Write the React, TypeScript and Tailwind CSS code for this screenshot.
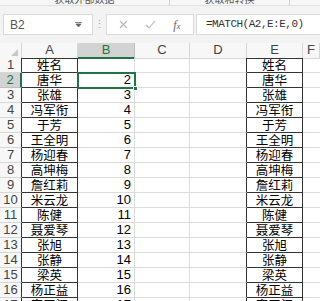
import React from 'react';

const names = [
  '姓名', '唐华', '张雄', '冯军衔', '于芳', '王全明', '杨迎春', '高坤梅', '詹红莉',
  '米云龙', '陈健', '聂爱琴', '张旭', '张静', '梁英', '杨正益', '宫玉江',
];

const cols = ['A', 'B', 'C', 'D', 'E', 'F'];

const gridCols = 'grid grid-cols-[22px_56px_57px_55px_57px_56px_1fr]';
const cjk = "font-['Noto_Sans_CJK_SC',sans-serif]";
const latin = "font-['Liberation_Sans',Arial,sans-serif]";

const App: React.FC = () => {
  return (
    <div className={`w-[320px] h-[301px] overflow-hidden bg-white ${latin}`}>
      {/* ribbon group labels, cut off at the top */}
      <div className="h-[6px] overflow-hidden flex items-end bg-[#f6f6f6] border-b border-[#e1e1e1]">
        <div className={`flex items-end h-[12px] shrink-0 text-[10px] leading-[12px] text-[#555] ${cjk}`}>
          <span className="w-[170px] text-center border-r border-[#cfcfcf]">获取外部数据</span>
          <span className="w-[120px] text-center border-r border-[#cfcfcf]">获取和转换</span>
        </div>
      </div>

      {/* formula bar */}
      <div className="h-[37px] pt-[8px] bg-[#f3f3f3] flex items-start">
        <div className="ml-[3px] w-[90px] h-[21px] bg-white border border-[#dadada] flex items-center justify-between pl-[6px] pr-[10px] text-[12px] text-[#555]">
          <span>B2</span>
          <svg width="7" height="5" viewBox="0 0 7 5">
            <path d="M0 0.5h7M1 2l2.5 3L6 2z" fill="#666" stroke="#666" strokeWidth="0.8" />
          </svg>
        </div>
        <div className="w-[13px] h-[21px] flex items-center justify-center text-[#aaa] text-[11px]">⋮</div>
        <div className="w-[88px] h-[21px] bg-white border border-[#dadada] flex items-center justify-around px-[4px] text-[#9a9a9a]">
          <svg width="9" height="9" viewBox="0 0 9 9">
            <path d="M1 1l7 7M8 1l-7 7" stroke="#b5b5b5" strokeWidth="1.1" />
          </svg>
          <svg width="11" height="9" viewBox="0 0 11 9">
            <path d="M1 5l3 3 6-7" stroke="#b5b5b5" strokeWidth="1.1" fill="none" />
          </svg>
          <span className="italic font-['Liberation_Serif',serif] text-[12px] text-[#666]">
            f<span className="text-[9px]">x</span>
          </span>
        </div>
        <div className="ml-[2px] flex-1 h-[21px] bg-white border border-[#dadada] border-r-0 flex items-center pl-[9px] text-[11px] tracking-[-0.5px] text-[#333] font-['Liberation_Mono',monospace]">
          =MATCH(A2,E:E,0)
        </div>
      </div>

      {/* sheet grid */}
      <div className="relative">
        <div className={`${gridCols} h-[15px] bg-[#f7f7f7] text-[13px] leading-[14px] text-[#444]`}>
          <div className="border-r border-b border-[#d6d6d6] flex items-end justify-end pr-[3px] pb-[2px]">
            <svg width="7" height="7" viewBox="0 0 7 7">
              <path d="M7 0V7H0z" fill="#c8c8c8" />
            </svg>
          </div>
          {cols.map((c) =>
            c === 'B' ? (
              <div key={c} className="bg-[#d3d3d3] border-r border-[#bdbdbd] border-b-2 border-b-[#217346] text-center text-[#217346]">
                {c}
              </div>
            ) : (
              <div
                key={c}
                className={`border-r border-[#d6d6d6] border-b text-center ${
                  c === 'A' || c === 'E' ? 'border-b-[#333]' : 'border-b-[#d6d6d6]'
                }`}
              >
                {c}
              </div>
            )
          )}
        </div>

        {names.map((name, i) => {
          const row = i + 1;
          const sel = row === 2;
          return (
            <div key={row} className={`${gridCols} h-[15px] text-[13px] leading-[14px]`}>
              <div
                className={`border-b text-center ${
                  sel
                    ? 'bg-[#d3d3d3] text-[#217346] border-r-2 border-r-[#217346] border-b-[#bdbdbd]'
                    : 'bg-[#f7f7f7] text-[#444] border-r border-r-[#333] border-b-[#d6d6d6]'
                }`}
              >
                {row}
              </div>
              <div className={`border-r border-b border-[#333] text-center text-black ${cjk} text-[12.5px] leading-[14px]`}>
                {name}
              </div>
              <div className="border-r border-b border-[#dcdcdc] text-right pr-[3px] text-black">
                {row > 1 ? row : ''}
              </div>
              <div className="border-r border-b border-[#dcdcdc]" />
              <div className="border-r border-r-[#333] border-b border-b-[#dcdcdc]" />
              <div className={`border-r border-b border-[#333] text-center text-black ${cjk} text-[12.5px] leading-[14px]`}>
                {name}
              </div>
              <div className="border-b border-[#dcdcdc]" />
            </div>
          );
        })}

        {/* active cell B2 */}
        <div className="absolute left-[77px] top-[29px] w-[59px] h-[17px] border-2 border-[#217346] pointer-events-none">
          <div className="absolute right-[-4px] bottom-[-4px] w-[5px] h-[5px] bg-[#217346] border border-white" />
        </div>
      </div>
    </div>
  );
};

export default App;
